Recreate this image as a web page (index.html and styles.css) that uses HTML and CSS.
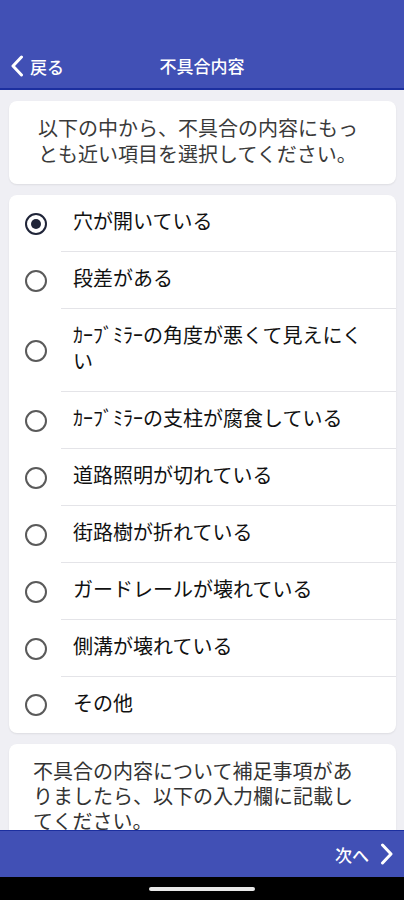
FILE: index.html
```html
<!DOCTYPE html>
<html lang="ja">
<head>
<meta charset="utf-8">
<title>不具合内容</title>
<link rel="stylesheet" href="styles.css">
</head>
<body>
<div class="screen">
  <header class="nav">
    <div class="nav-back">
      <svg class="chev" width="14" height="22" viewBox="0 0 14 22"><path d="M11.5 2 L3 11 L11.5 20" fill="none" stroke="#fff" stroke-width="3" stroke-linecap="round" stroke-linejoin="round"/></svg>
      <span>戻る</span>
    </div>
    <div class="nav-title">不具合内容</div>
  </header>
  <main class="content">
    <section class="card intro">以下の中から、不具合の内容にもっとも近い項目を選択してください。</section>
    <section class="card list">
      <div class="row"><span class="radio checked"></span><div class="label">穴が開いている</div></div>
      <div class="row"><span class="radio"></span><div class="label">段差がある</div></div>
      <div class="row"><span class="radio"></span><div class="label">ｶｰﾌﾞﾐﾗｰの角度が悪くて見えにくい</div></div>
      <div class="row"><span class="radio"></span><div class="label">ｶｰﾌﾞﾐﾗｰの支柱が腐食している</div></div>
      <div class="row"><span class="radio"></span><div class="label">道路照明が切れている</div></div>
      <div class="row"><span class="radio"></span><div class="label">街路樹が折れている</div></div>
      <div class="row"><span class="radio"></span><div class="label">ガードレールが壊れている</div></div>
      <div class="row"><span class="radio"></span><div class="label">側溝が壊れている</div></div>
      <div class="row"><span class="radio"></span><div class="label last">その他</div></div>
    </section>
    <section class="card note">
      <p>不具合の内容について補足事項がありましたら、以下の入力欄に記載してください。</p>
      <div class="input"></div>
    </section>
  </main>
  <footer class="bottom">
    <div class="next">
      <span>次へ</span>
      <svg width="14" height="22" viewBox="0 0 14 22"><path d="M2.5 2 L11 11 L2.5 20" fill="none" stroke="#fff" stroke-width="3" stroke-linecap="round" stroke-linejoin="round"/></svg>
    </div>
  </footer>
  <div class="homebar"><span class="indicator"></span></div>
</div>
</body>
</html>
```

FILE: styles.css
```css
* { box-sizing: border-box; }
html, body { margin: 0; padding: 0; }
body {
  font-family: "Noto Sans CJK JP", "Noto Sans", sans-serif;
  background: #000;
}
.screen {
  width: 404px;
  height: 900px;
  display: flex;
  flex-direction: column;
  background: #efeff4;
  overflow: hidden;
}
.nav {
  height: 90px;
  flex: none;
  background: #4150b5;
  border-bottom: 2px solid #1c2f9f;
  position: relative;
  display: flex;
  align-items: flex-end;
  padding: 0 0 10px 10px;
  color: #fff;
}
.nav-back {
  display: flex;
  align-items: center;
  gap: 6px;
  font-size: 17px;
  font-weight: 500;
  height: 24px;
}
.chev { display: block; }
.nav-title {
  position: absolute;
  left: 0;
  right: 0;
  bottom: 10px;
  height: 24px;
  line-height: 24px;
  text-align: center;
  font-size: 17px;
  font-weight: 500;
  pointer-events: none;
}
.content {
  flex: 1;
  overflow: hidden;
  padding: 11px 8px 0 9px;
  display: flex;
  flex-direction: column;
  gap: 11px;
}
.card {
  background: #fff;
  border-radius: 8px;
  box-shadow: 0 1px 2px rgba(0,0,0,0.08);
  flex: none;
}
.intro {
  padding: 14px 29px 17px;
  font-size: 20px;
  line-height: 26px;
  color: #3a3a3a;
}
.list { padding: 0; }
.row {
  display: flex;
  align-items: stretch;
}
.radio {
  flex: none;
  width: 22px;
  height: 22px;
  margin: 0 14px 0 16px;
  align-self: center;
  border: 2px solid #5a5a5a;
  border-radius: 50%;
  display: flex;
  align-items: center;
  justify-content: center;
}
.radio.checked { border-color: #1f2438; }
.radio.checked::after {
  content: "";
  width: 10px;
  height: 10px;
  border-radius: 50%;
  background: #1f2438;
}
.label {
  flex: 1;
  padding: 13px 22px 17px 12px;
  font-size: 20px;
  line-height: 26px;
  color: #111;
  border-bottom: 1px solid #e4e4e8;
}
.label.last { border-bottom: none; }
.note {
  padding: 14px 24px 20px;
  font-size: 20px;
  line-height: 25px;
  color: #333;
}
.note p { margin: 0; }
.input {
  margin-top: 14px;
  height: 120px;
  border: 1px solid #ccc;
  border-radius: 6px;
}
.bottom {
  flex: none;
  height: 47px;
  background: #4150b5;
  border-top: 1px solid #1c2f9f;
  display: flex;
  justify-content: flex-end;
  align-items: center;
  padding-right: 10px;
  color: #fff;
}
.next {
  display: flex;
  align-items: center;
  gap: 11px;
  font-size: 17px;
  font-weight: 500;
}
.next svg { display: block; }
.homebar {
  flex: none;
  height: 23px;
  background: #000;
  display: flex;
  justify-content: center;
  align-items: center;
}
.indicator {
  width: 106px;
  height: 4px;
  border-radius: 2px;
  background: #e8e8e8;
}
```
